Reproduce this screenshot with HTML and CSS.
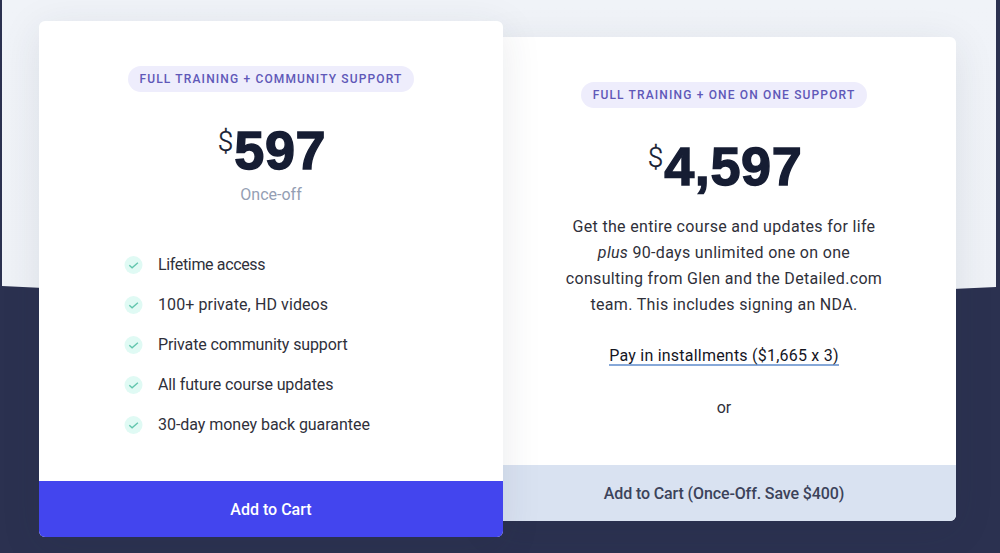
FILE: index.html
```html
<!DOCTYPE html>
<html lang="en">
<head>
	<meta charset="UTF-8">
	<title>Pricing</title>
	<link rel="stylesheet" href="styles.css">
</head>
<body>
	<svg width="0" height="0" class="defs">
		<symbol id="check" viewBox="0 0 20 20">
			<circle cx="9.5" cy="10" r="9" fill="#e0faf4"/>
			<path d="M5.3 10.2l2.8 2.5 5.8-5" fill="none" stroke="#62c6ae" stroke-width="1.4"/>
		</symbol>
	</svg>
	<section class="pricing">
		<div class="card main">
			<div class="content">
				<span class="pill">FULL TRAINING + COMMUNITY SUPPORT</span>
				<div class="price"><sup>$</sup><b>597</b></div>
				<p class="note">Once-off</p>
				<ul class="features">
					<li><svg><use href="#check"/></svg><span>Lifetime access</span></li>
					<li><svg><use href="#check"/></svg><span>100+ private, HD videos</span></li>
					<li><svg><use href="#check"/></svg><span>Private community support</span></li>
					<li><svg><use href="#check"/></svg><span>All future course updates</span></li>
					<li><svg><use href="#check"/></svg><span>30-day money back guarantee</span></li>
				</ul>
			</div>
			<a class="btn">Add to Cart</a>
		</div>
		<div class="card side">
			<div class="content">
				<span class="pill">FULL TRAINING + ONE ON ONE SUPPORT</span>
				<div class="price"><sup>$</sup><b>4,597</b></div>
				<p class="desc">Get the entire course and updates for life<br><em>plus</em> 90-days unlimited one on one<br>consulting from Glen and the Detailed.com<br>team. This includes signing an NDA.</p>
				<p class="pay"><a>Pay in installments ($1,665 x 3)</a></p>
				<p class="or">or</p>
			</div>
			<a class="btn">Add to Cart (Once-Off. Save $400)</a>
		</div>
	</section>
</body>
</html>
```
FILE: styles.css
```css
*{
	box-sizing:border-box;
}
body{
	margin:0;
	background:#2b3150;
	font-family:Roboto, "Liberation Sans", sans-serif;
	font-size:16px;
	line-height:26px;
	color:#2f303a;
}
p,ul{
	margin:0;
	padding:0;
	list-style:none;
}
.defs{
	position:absolute;
}
.pricing{
	position:relative;
	display:flex;
	align-items:flex-start;
	height:553px;
	padding:21px 44px 0 39px;
	overflow:hidden;
}
/* light backdrop, ends in a shallow point */
.pricing:before{
	content:"";
	position:absolute;
	top:0;
	left:2px;
	width:994px;
	height:310px;
	background:linear-gradient(#f0f3f8, #eff2f7);
	clip-path:polygon(0 0, 100% 0, 100% 287px, 50% 310px, 0 286px);
}
.card{
	position:relative;
	display:flex;
	flex-direction:column;
	width:464px;
	background:#fff;
	border-radius:6px;
	text-align:center;
	box-shadow:0 8px 40px rgba(40,50,70,.1);
}
.main{
	z-index:2;
	height:516px;
}
.side{
	z-index:1;
	height:484px;
	margin:16px 0 0 -11px;
}
.content{
	flex:1;
	padding-top:45px;
}
.pill{
	display:block;
	width:286px;
	height:26px;
	margin:0 auto;
	border-radius:13px;
	background:#eeedfc;
	color:#5f58b8;
	font-size:12px;
	font-weight:500;
	letter-spacing:1.15px;
	white-space:nowrap;
}
.price{
	display:flex;
	justify-content:center;
	height:76px;
	padding:28px 0 0 2px;
	color:#161d33;
	line-height:60px;
}
.price sup{
	font-size:28px;
	font-weight:300;
	line-height:43px;
	-webkit-text-stroke:.3px #161d33;
}
.price b{
	margin-left:1px;
	font-family:"Liberation Sans", sans-serif;
	font-size:54px;
	letter-spacing:.6px;
	-webkit-text-stroke:1.4px #161d33;
}
.note{
	margin-top:14px;
	color:#949eb3;
}
.features{
	display:flex;
	flex-direction:column;
	gap:14px;
	margin:44px 0 0 85px;
	letter-spacing:-.12px;
}
.features li{
	display:flex;
	align-items:center;
	gap:14px;
}
.features li:nth-child(1){
	letter-spacing:-.35px;
}
.features li:nth-child(2){
	letter-spacing:.1px;
}
.features li:nth-child(5){
	letter-spacing:-.04px;
}
.features svg{
	width:20px;
	height:20px;
}
.btn{
	height:56px;
	border-radius:0 0 6px 6px;
	background:#4345ee;
	color:#fff;
	font-weight:500;
	line-height:57px;
}
.side .btn{
	background:#d9e2f1;
	color:#3c435a;
	letter-spacing:-.12px;
}
.desc{
	margin-top:30px;
	letter-spacing:.32px;
}
.pay{
	height:26px;
	margin-top:25px;
	color:#15161f;
	letter-spacing:.22px;
}
.pay a{
	display:inline-block;
	height:23px;
	border-bottom:2px solid #86a8d8;
}
.or{
	margin-top:26px;
}
```
